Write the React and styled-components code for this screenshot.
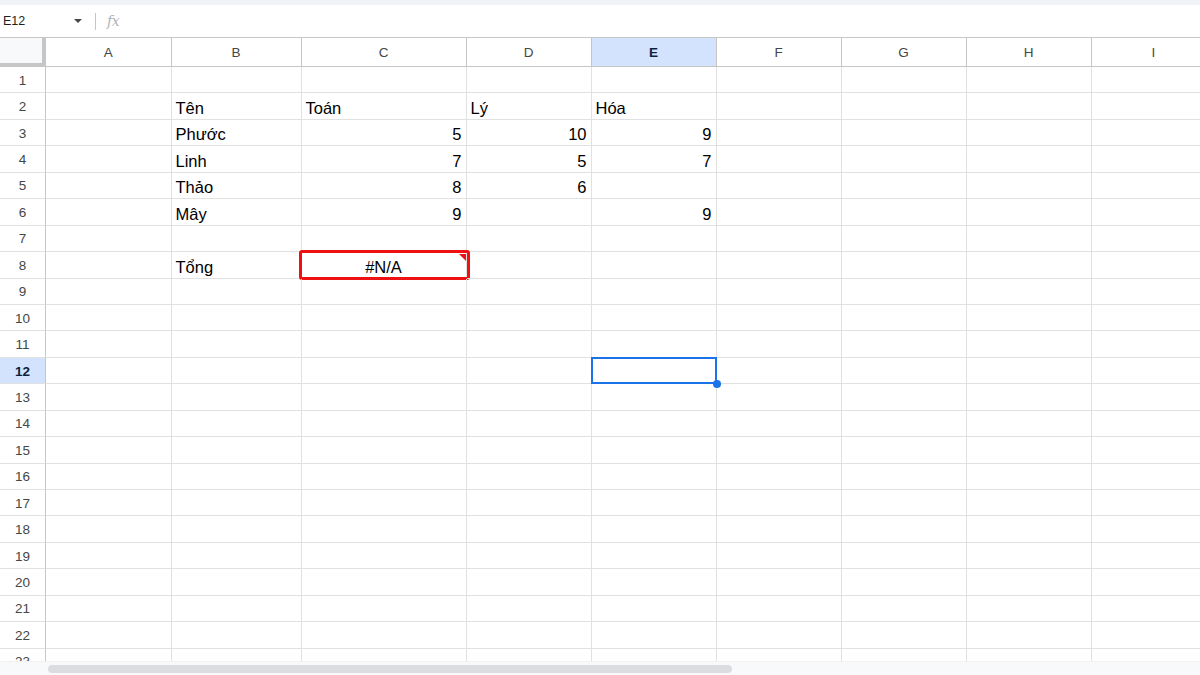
import React from "react";
import styled, { createGlobalStyle, css } from "styled-components";

const Global = createGlobalStyle`
  html, body { margin: 0; padding: 0; background: #fff; overflow: hidden; }
  body { font-family: "Liberation Sans", Arial, sans-serif; }
`;

const COLS = [
  { key: "A", w: 125.5 },
  { key: "B", w: 130 },
  { key: "C", w: 165 },
  { key: "D", w: 125 },
  { key: "E", w: 125 },
  { key: "F", w: 125 },
  { key: "G", w: 125 },
  { key: "H", w: 125 },
  { key: "I", w: 125 },
];
const ROW_H = 26.45;
const template = `46px ${COLS.map((c) => c.w + "px").join(" ")}`;

const DATA = {
  2: { B: ["Tên"], C: ["Toán"], D: ["Lý"], E: ["Hóa"] },
  3: { B: ["Phước"], C: ["5", "r"], D: ["10", "r"], E: ["9", "r"] },
  4: { B: ["Linh"], C: ["7", "r"], D: ["5", "r"], E: ["7", "r"] },
  5: { B: ["Thảo"], C: ["8", "r"], D: ["6", "r"] },
  6: { B: ["Mây"], C: ["9", "r"], E: ["9", "r"] },
  8: { B: ["Tổng"], C: ["#N/A", "c"] },
};

const Page = styled.div`
  width: 1200px;
  height: 675px;
  display: flex;
  flex-direction: column;
  overflow: hidden;
`;

const TopStrip = styled.div`
  height: 5px;
  background: #f0f4f9;
  flex: none;
`;

const FormulaBar = styled.div`
  height: 32px;
  flex: none;
  display: flex;
  align-items: center;
  background: #fff;
`;

const NameBox = styled.div`
  width: 95px;
  display: flex;
  align-items: center;
  justify-content: space-between;
  padding: 0 13px 0 3px;
  box-sizing: border-box;
  font-size: 12.5px;
  color: #1f1f1f;
`;

const Caret = styled.span`
  width: 0;
  height: 0;
  border-left: 4px solid transparent;
  border-right: 4px solid transparent;
  border-top: 4px solid #444746;
`;

const Divider = styled.span`
  width: 1px;
  height: 17px;
  background: #c4c7c5;
`;

const Fx = styled.span`
  margin-left: 11px;
  font-family: "DejaVu Serif", "Liberation Serif", serif;
  font-style: italic;
  font-size: 14px;
  color: #b0b3b5;
  letter-spacing: -0.5px;
`;

const GridArea = styled.div`
  flex: 1;
  overflow: hidden;
  border-top: 1px solid #c4c7c5;
`;

const Grid = styled.div`
  display: grid;
  grid-template-columns: ${template};
  grid-template-rows: 29px repeat(23, ${ROW_H}px);
`;

const Corner = styled.div`
  background: #f8f9fa;
  border-right: 4px solid #c4c7c5;
  border-bottom: 4px solid #c4c7c5;
  box-sizing: border-box;
`;

const ColHead = styled.div`
  display: flex;
  align-items: center;
  justify-content: center;
  font-size: 13.5px;
  color: #444746;
  border-right: 1px solid #c4c7c5;
  border-bottom: 1px solid #c4c7c5;
  box-sizing: border-box;
  ${(p) =>
    p.$active &&
    css`
      background: #d3e3fd;
      color: #0b1f3f;
      font-weight: bold;
    `}
`;

const RowHead = styled.div`
  display: flex;
  align-items: center;
  justify-content: center;
  padding-top: 1px;
  font-size: 13.5px;
  color: #444746;
  border-right: 1px solid #c4c7c5;
  border-bottom: 1px solid #e1e1e1;
  box-sizing: border-box;
  ${(p) =>
    p.$active &&
    css`
      background: #d3e3fd;
      color: #0b1f3f;
      font-weight: bold;
    `}
`;

const Cell = styled.div`
  position: relative;
  display: flex;
  align-items: flex-end;
  justify-content: ${(p) =>
    p.$align === "r" ? "flex-end" : p.$align === "c" ? "center" : "flex-start"};
  padding: 0 4px 1px 4px;
  font-size: 16.5px;
  color: #000;
  border-right: 1px solid #e1e1e1;
  border-bottom: 1px solid #e1e1e1;
  box-sizing: border-box;
  white-space: nowrap;
  ${(p) =>
    p.$error &&
    css`
      &::after {
        content: "";
        position: absolute;
        left: -3px;
        top: -2px;
        right: -4px;
        bottom: -2px;
        border: 3px solid #ee1111;
        border-radius: 3px;
      }
      &::before {
        content: "";
        position: absolute;
        top: 2px;
        right: 0px;
        width: 0;
        height: 0;
        border-top: 7px solid #ee1111;
        border-left: 7px solid transparent;
      }
    `}
  ${(p) =>
    p.$selected &&
    css`
      &::after {
        content: "";
        position: absolute;
        left: -1px;
        top: -1px;
        right: -1px;
        bottom: -1px;
        border: 2px solid #1a73e8;
      }
      &::before {
        content: "";
        position: absolute;
        right: -5px;
        bottom: -5px;
        width: 8px;
        height: 8px;
        border-radius: 50%;
        background: #1a73e8;
        z-index: 2;
      }
    `}
`;

const ScrollBar = styled.div`
  height: 13px;
  flex: none;
  background: #f8f9fa;
  display: flex;
  align-items: center;
  padding-left: 48px;
  border-top: 1px solid #f1f1f1;
`;

const Thumb = styled.div`
  width: 684px;
  height: 8px;
  border-radius: 4px;
  background: #dadce0;
`;

export default function App() {
  const rows = Array.from({ length: 23 }, (_, i) => i + 1);
  return (
    <Page>
      <Global />
      <TopStrip />
      <FormulaBar>
        <NameBox>
          E12
          <Caret />
        </NameBox>
        <Divider />
        <Fx>fx</Fx>
      </FormulaBar>
      <GridArea>
        <Grid>
          <Corner />
          {COLS.map((c) => (
            <ColHead key={c.key} $active={c.key === "E"}>
              {c.key}
            </ColHead>
          ))}
          {rows.map((r) => (
            <React.Fragment key={r}>
              <RowHead $active={r === 12}>{r}</RowHead>
              {COLS.map((c) => {
                const v = DATA[r] && DATA[r][c.key];
                return (
                  <Cell
                    key={c.key}
                    $align={v ? v[1] : undefined}
                    $error={r === 8 && c.key === "C"}
                    $selected={r === 12 && c.key === "E"}
                  >
                    {v ? v[0] : ""}
                  </Cell>
                );
              })}
            </React.Fragment>
          ))}
        </Grid>
      </GridArea>
      <ScrollBar>
        <Thumb />
      </ScrollBar>
    </Page>
  );
}
